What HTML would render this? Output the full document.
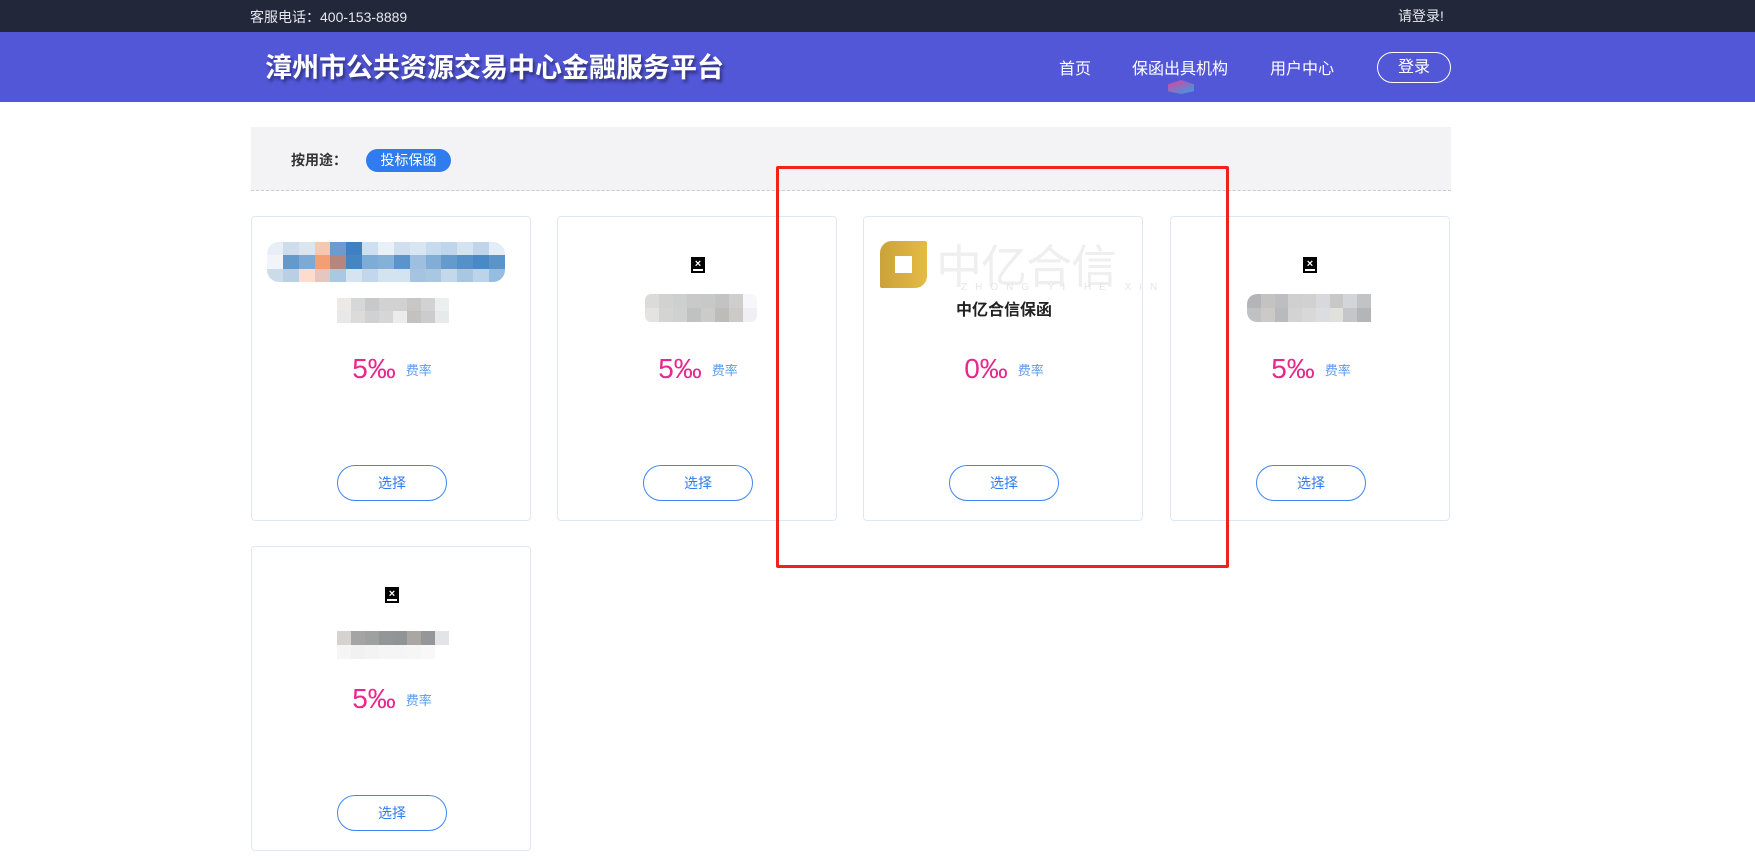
<!DOCTYPE html>
<html><head><meta charset="utf-8"><style>
*{margin:0;padding:0;box-sizing:border-box}
body{width:1755px;height:860px;background:#fff;font-family:"Liberation Sans","Noto Sans CJK SC",sans-serif;position:relative;overflow:hidden}
.a{position:absolute}
.top{left:0;top:0;width:1755px;height:32px;background:#22273a;color:#e6e8ee;font-size:14px}
.hd{left:0;top:32px;width:1755px;height:70px;background:#5257d8;color:#fff}
.card{position:absolute;width:280px;height:305px;border:1px solid #dde8f5;border-radius:4px;background:#fff}
.rate{position:absolute;left:0;width:280px;top:136px;text-align:center;color:#e8288c;font-size:28px;white-space:nowrap}
.rate span{color:#5b9bf0;font-size:13px;margin-left:10px;vertical-align:3px}
.btn{position:absolute;left:85px;top:248px;width:110px;height:36px;border:1px solid #3f86f2;border-radius:18px;color:#2f7cf0;font-size:14px;text-align:center;line-height:34px}
.bk{position:absolute;width:14px;height:16px;border:2px solid #000;background:#fff}
.bk:after{content:"×";position:absolute;left:0;top:0;width:10px;height:10px;background:#000;color:#fff;font-size:11px;line-height:10px;text-align:center;font-weight:bold}
.pix{position:absolute;display:flex;flex-direction:column}
.pix div{display:flex;flex:1}.pix i{flex:1}
</style></head><body>
<div class="a top"><span class="a" style="left:250px;top:7px">客服电话：400-153-8889</span><span class="a" style="left:1398px;top:6px">请登录!</span></div>
<div class="a hd">
<div class="a" style="left:265px;top:14px;font-size:27px;font-weight:bold;text-shadow:2px 3px 3px rgba(0,0,0,.45)">漳州市公共资源交易中心金融服务平台</div>
<div class="a" style="left:1059px;top:23px;font-size:16px">首页</div>
<div class="a" style="left:1132px;top:23px;font-size:16px">保函出具机构</div>
<div class="a" style="left:1168px;top:48px;width:26px;height:14px;background:linear-gradient(160deg,#e2409a,#2fa0e8);clip-path:polygon(0 30%,50% 0,100% 30%,100% 80%,50% 100%,0 80%)"></div>
<div class="a" style="left:1270px;top:23px;font-size:16px">用户中心</div>
<div class="a" style="left:1377px;top:20px;width:74px;height:31px;border:1px solid #fff;border-radius:16px;text-align:center;line-height:29px;font-size:16px">登录</div>
</div>
<div class="a" style="left:251px;top:127px;width:1200px;height:64px;background:#f3f3f5;border-bottom:1px dashed #ccc">
<span class="a" style="left:40px;top:23px;font-size:14px;font-weight:bold;color:#333">按用途：</span>
<span class="a" style="left:115px;top:22px;width:85px;height:23px;background:#2f7cf0;color:#fff;border-radius:12px;font-size:14px;text-align:center;line-height:23px">投标保函</span>
</div>

<div class="card" style="left:251px;top:216px">
<div class="pix" style="left:15px;top:25px;width:238px;height:40px;border-radius:12px;overflow:hidden">
<div><i style="background:#e8eef5"></i><i style="background:#cfdced"></i><i style="background:#dbe5f0"></i><i style="background:#f6c8b0"></i><i style="background:#6b9bd0"></i><i style="background:#3f80c2"></i><i style="background:#cddff0"></i><i style="background:#e8f0f8"></i><i style="background:#cfdff0"></i><i style="background:#d8e6f2"></i><i style="background:#c7dbef"></i><i style="background:#bfd5eb"></i><i style="background:#d4e3f0"></i><i style="background:#c0d5ea"></i><i style="background:#e4edf6"></i></div>
<div><i style="background:#f1f5f9"></i><i style="background:#6399cb"></i><i style="background:#7caad5"></i><i style="background:#f49e76"></i><i style="background:#b3867f"></i><i style="background:#4585c2"></i><i style="background:#7dacd6"></i><i style="background:#85b0d8"></i><i style="background:#5c93ca"></i><i style="background:#9ebfe0"></i><i style="background:#82aed6"></i><i style="background:#659bcc"></i><i style="background:#5590c8"></i><i style="background:#4b89c4"></i><i style="background:#5a94c8"></i></div>
<div><i style="background:#cbdbea"></i><i style="background:#bacfe3"></i><i style="background:#fcdccc"></i><i style="background:#e6c7c0"></i><i style="background:#aac8e3"></i><i style="background:#d6e4f1"></i><i style="background:#c2d7eb"></i><i style="background:#d4e3f0"></i><i style="background:#d4e3f0"></i><i style="background:#a6c4e1"></i><i style="background:#aac7e2"></i><i style="background:#c3d8eb"></i><i style="background:#a9c6e2"></i><i style="background:#bdd3e9"></i><i style="background:#96bcdf"></i></div></div>
<div class="pix" style="left:85px;top:81px;width:112px;height:25px"><div><i style="background:#ece9e8"></i><i style="background:#d6d7d9"></i><i style="background:#c8c9c8"></i><i style="background:#d2d2d2"></i><i style="background:#d1d1d1"></i><i style="background:#c8c7c6"></i><i style="background:#d2d2d2"></i><i style="background:#ecefef"></i></div><div><i style="background:#e8e8e9"></i><i style="background:#dcdbda"></i><i style="background:#d0d1d3"></i><i style="background:#d6d6d6"></i><i style="background:#ececec"></i><i style="background:#c3c2c0"></i><i style="background:#ccccce"></i><i style="background:#e8e9e9"></i></div></div>
<div class="rate">5‰<span>费率</span></div><div class="btn">选择</div></div>

<div class="card" style="left:557px;top:216px">
<div class="bk" style="left:133px;top:40px"></div>
<div class="pix" style="left:87px;top:77px;width:112px;height:28px;border-radius:6px;overflow:hidden"><div><i style="background:#dcdbd9"></i><i style="background:#d2d2d0"></i><i style="background:#cdd0cf"></i><i style="background:#c9c9c9"></i><i style="background:#c7c8c8"></i><i style="background:#c3c3c5"></i><i style="background:#cfcecc"></i><i style="background:#f6f7fa"></i></div><div><i style="background:#e4e3e2"></i><i style="background:#d4d4d4"></i><i style="background:#cfd1d0"></i><i style="background:#bfc2c0"></i><i style="background:#cbcbcb"></i><i style="background:#bdbcb9"></i><i style="background:#cbcac9"></i><i style="background:#f0f0f4"></i></div></div>
<div class="rate">5‰<span>费率</span></div><div class="btn">选择</div></div>

<div class="card" style="left:863px;top:216px">
<div class="a" style="left:16px;top:24px;width:47px;height:47px;background:linear-gradient(90deg,#c9a23a,#e6bb45);border-radius:12px 2px 12px 2px"><div class="a" style="left:15px;top:15px;width:17px;height:17px;background:#fff"></div></div>
<div class="a" style="left:72px;top:14px;font-size:46px;color:#efefef;letter-spacing:-1px;white-space:nowrap">中亿合信</div>
<div class="a" style="left:97px;top:65px;font-size:10px;color:#e6e6e6;letter-spacing:8px;white-space:nowrap">ZHONG YI HE XIN</div>
<div class="a" style="left:0;width:280px;top:79px;text-align:center;font-size:16px;font-weight:bold;color:#222">中亿合信保函</div>
<div class="rate">0‰<span>费率</span></div><div class="btn">选择</div></div>

<div class="card" style="left:1170px;top:216px">
<div class="bk" style="left:132px;top:40px"></div>
<div class="pix" style="left:76px;top:77px;width:124px;height:28px;border-radius:10px 0 0 10px;overflow:hidden"><div><i style="background:#b4b5b8"></i><i style="background:#c5c3c1"></i><i style="background:#bdbec2"></i><i style="background:#d0d0d0"></i><i style="background:#d2d1cf"></i><i style="background:#d8d9dc"></i><i style="background:#c9c8c7"></i><i style="background:#d3d5d9"></i><i style="background:#c2c3c5"></i></div><div><i style="background:#c0c1c3"></i><i style="background:#cbcac6"></i><i style="background:#b8babe"></i><i style="background:#d3d3d3"></i><i style="background:#d8d8d8"></i><i style="background:#dbdde0"></i><i style="background:#e0e0dd"></i><i style="background:#c5c6c8"></i><i style="background:#b2b6b8"></i></div></div>
<div class="rate">5‰<span>费率</span></div><div class="btn">选择</div></div>

<div class="card" style="left:251px;top:546px">
<div class="bk" style="left:133px;top:40px"></div>
<div class="pix" style="left:85px;top:84px;width:112px;height:28px"><div><i style="background:#d5d2d0"></i><i style="background:#a4a4a4"></i><i style="background:#9fa0a0"></i><i style="background:#939697"></i><i style="background:#919394"></i><i style="background:#aaa6a3"></i><i style="background:#94969a"></i><i style="background:#e3e4e6"></i></div><div><i style="background:#f5f5f5"></i><i style="background:#f1f1f1"></i><i style="background:#f3f3f3"></i><i style="background:#f5f5f5"></i><i style="background:#f5f5f5"></i><i style="background:#f6f6f6"></i><i style="background:#f8f8f8"></i><i style="background:#fff"></i></div></div>
<div class="rate">5‰<span>费率</span></div><div class="btn">选择</div></div>

<div class="a" style="left:776px;top:166px;width:453px;height:402px;border:3px solid #f0221c;border-radius:2px"></div>
</body></html>
